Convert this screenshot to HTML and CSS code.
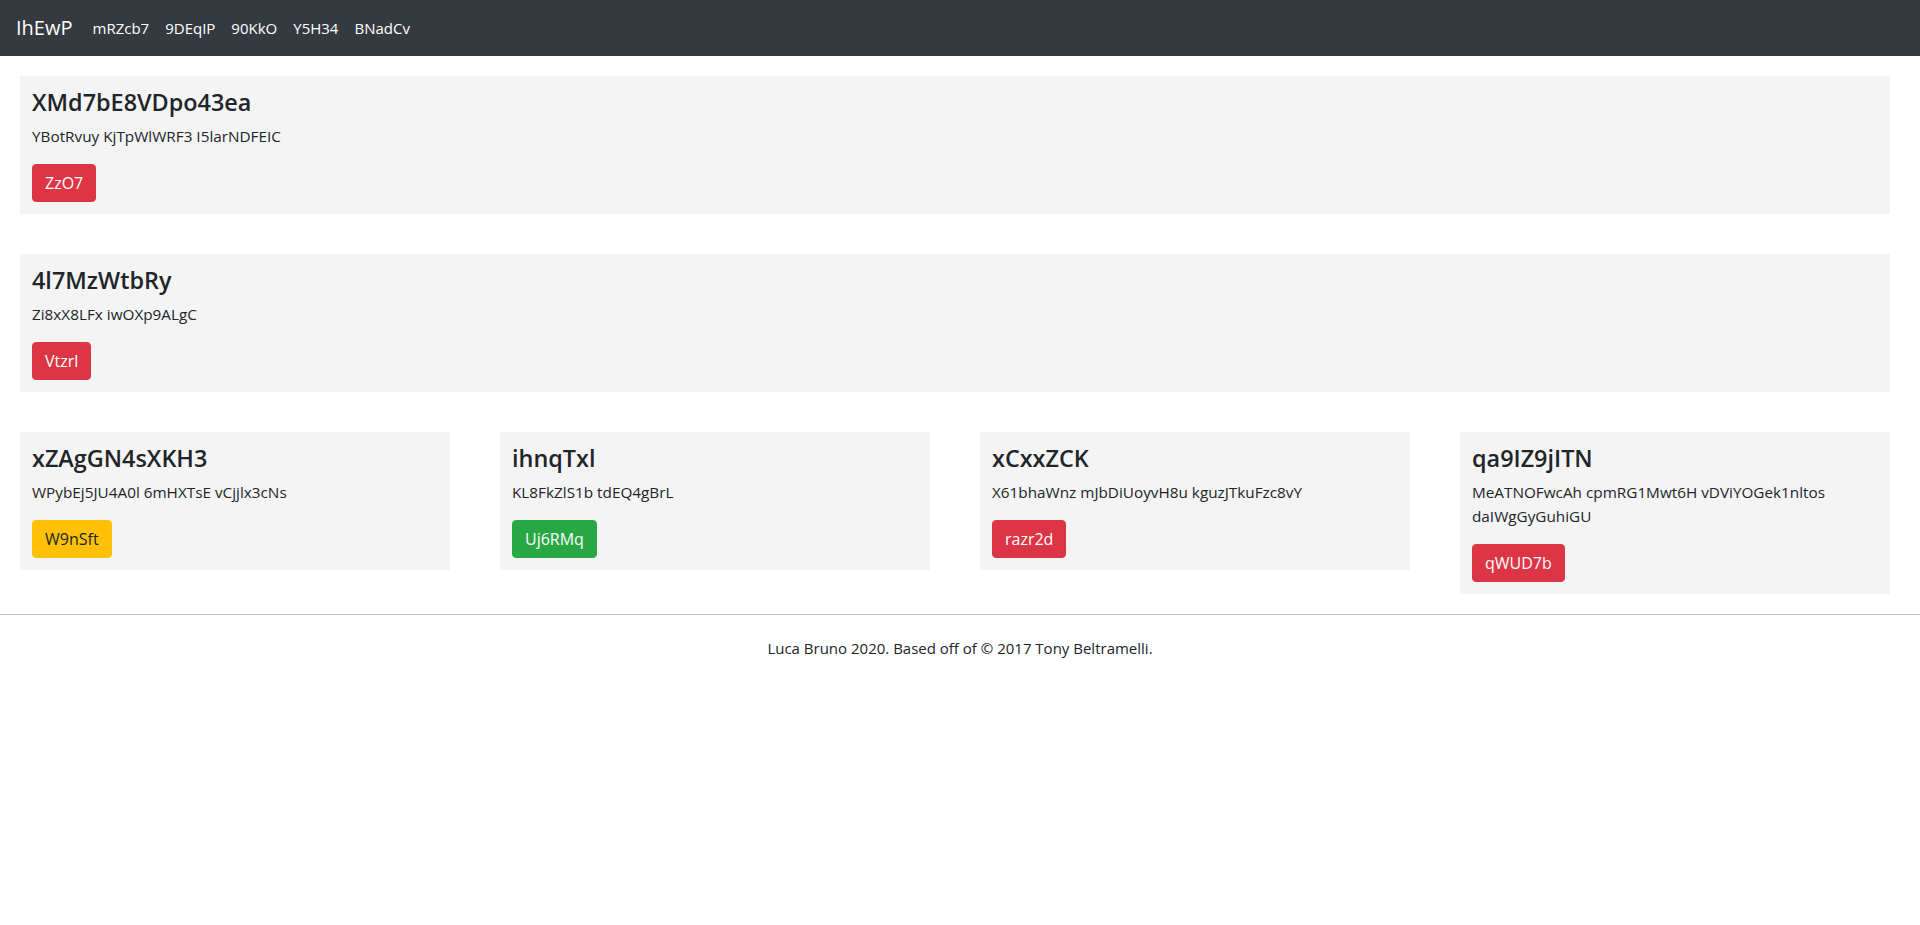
FILE: index.html
```html
<!DOCTYPE html>
<html lang="en">
<head>
<meta charset="utf-8">
<title>IhEwP</title>
<link rel="stylesheet" href="styles.css">
</head>
<body>
<header class="navbar">
  <a class="brand" href="#">IhEwP</a>
  <nav class="nav">
    <a class="nav-link" href="#">mRZcb7</a>
    <a class="nav-link" href="#">9DEqIP</a>
    <a class="nav-link" href="#">90KkO</a>
    <a class="nav-link" href="#">Y5H34</a>
    <a class="nav-link" href="#">BNadCv</a>
  </nav>
</header>
<main class="page">
  <section class="card">
    <h4 class="card-title">XMd7bE8VDpo43ea</h4>
    <p class="card-text">YBotRvuy KjTpWlWRF3 I5larNDFEIC</p>
    <a class="btn btn-danger" href="#">ZzO7</a>
  </section>
  <section class="card">
    <h4 class="card-title">4l7MzWtbRy</h4>
    <p class="card-text">Zi8xX8LFx iwOXp9ALgC</p>
    <a class="btn btn-danger" href="#">Vtzrl</a>
  </section>
  <div class="grid">
    <section class="card">
      <h4 class="card-title">xZAgGN4sXKH3</h4>
      <p class="card-text">WPybEj5JU4A0l 6mHXTsE vCjjlx3cNs</p>
      <a class="btn btn-warning" href="#">W9nSft</a>
    </section>
    <section class="card">
      <h4 class="card-title">ihnqTxl</h4>
      <p class="card-text">KL8FkZlS1b tdEQ4gBrL</p>
      <a class="btn btn-success" href="#">Uj6RMq</a>
    </section>
    <section class="card">
      <h4 class="card-title">xCxxZCK</h4>
      <p class="card-text">X61bhaWnz mJbDiUoyvH8u kguzJTkuFzc8vY</p>
      <a class="btn btn-danger" href="#">razr2d</a>
    </section>
    <section class="card">
      <h4 class="card-title">qa9IZ9jITN</h4>
      <p class="card-text">MeATNOFwcAh cpmRG1Mwt6H vDViYOGek1nltos daIWgGyGuhiGU</p>
      <a class="btn btn-danger" href="#">qWUD7b</a>
    </section>
  </div>
</main>
<footer class="footer">
  <hr class="rule">
  <p class="footer-text">Luca Bruno 2020. Based off of © 2017 Tony Beltramelli.</p>
</footer>
</body>
</html>
```
FILE: styles.css
```css
* { box-sizing: border-box; }
html, body { margin: 0; padding: 0; }
body {
  font-family: "Open Sans", "Noto Sans", "Liberation Sans", sans-serif;
  font-size: 16px;
  line-height: 1.5;
  color: #212529;
  background: #fff;
}
a { text-decoration: none; }

.navbar {
  height: 56px;
  background: #343a40;
  display: flex;
  align-items: center;
  padding: 0 16px;
}
.brand {
  color: #fff;
  font-size: 20px;
  line-height: 30px;
  margin-right: 12px;
}
.nav { display: flex; }
.nav-link {
  color: #fff;
  font-size: 15px;
  font-weight: 500;
  padding: 8px 8px;
}

.page {
  padding: 20px 30px 0 20px;
  display: flex;
  flex-direction: column;
  gap: 40px;
}
.card {
  background: #f4f4f4;
  padding: 12px;
  display: flex;
  flex-direction: column;
  align-items: flex-start;
}
.card-title {
  margin: 0 0 8px;
  font-size: 23.4px;
  font-weight: 600;
  line-height: 28px;
}
.card-text {
  margin: 0 0 16px;
  font-size: 15.3px;
  line-height: 24px;
}
.grid {
  display: grid;
  grid-template-columns: repeat(4, 1fr);
  gap: 50px;
  align-items: start;
}
.btn {
  display: inline-block;
  padding: 6px 12px;
  border: 1px solid transparent;
  border-radius: 4px;
  font-size: 16px;
  line-height: 24px;
  color: #fff;
}
.btn-danger { background: #dc3545; border-color: #dc3545; }
.btn-success { background: #28a745; border-color: #28a745; }
.btn-warning { background: #ffc107; border-color: #ffc107; color: #212529; }

.footer { margin-top: 20px; }
.rule {
  margin: 0;
  border: 0;
  border-top: 1px solid #c4c4c4;
}
.footer-text {
  margin: 22px 0 0;
  text-align: center;
  font-size: 15px;
}
```
